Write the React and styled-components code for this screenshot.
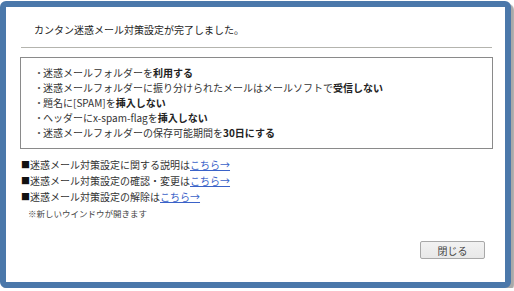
import React from 'react';
import styled, { createGlobalStyle } from 'styled-components';

const GlobalStyle = createGlobalStyle`
  html, body {
    margin: 0;
    padding: 0;
    background: #ffffff;
  }
  body {
    font-family: "DejaVu Sans", "Noto Sans CJK JP", sans-serif;
    color: #333333;
  }
`;

const Window = styled.div`
  box-sizing: border-box;
  width: 511px;
  height: 287px;
  margin-top: 1px;
  border: 6px solid #4b78aa;
  border-radius: 6px;
  background: #ffffff;
  box-shadow: 3px 3px 1px #a9a9a9;
  padding: 0 12px 0 14px;
  display: flex;
  flex-direction: column;
`;

const Title = styled.div`
  font-family: "Noto Sans CJK JP", sans-serif;
  font-size: 10px;
  line-height: 15px;
  color: #1e1e1e;
  padding: 15px 0 0 13px;
  height: 25px;
  border-bottom: 1px solid #b4b4ae;
  margin: 0 1px 0 1px;
`;

const SettingBox = styled.ul`
  list-style: none;
  margin: 9px 0 0 0;
  padding: 7px 0 8px 13px;
  border: 1px solid #8a8a8a;
`;

const Item = styled.li`
  font-family: "Noto Sans CJK JP", sans-serif;
  font-size: 10px;
  line-height: 15px;
  display: flex;
  &::before {
    content: "・";
    width: 9px;
    color: #555555;
  }
  b {
    font-weight: 700;
    color: #222222;
  }
`;

const LinkList = styled.div`
  margin-top: 8px;
  padding-left: 1px;
`;

const LinkRow = styled.div`
  font-family: "Noto Sans CJK JP", sans-serif;
  font-size: 10px;
  line-height: 15px;
  color: #333333;
  &::before {
    content: "■";
    font-family: "Noto Sans CJK JP", sans-serif;
    font-size: 9px;
    color: #111111;
    position: relative;
    top: -1px;
  }
  a {
    color: #3a62c8;
    text-decoration: underline;
  }
`;

const Note = styled.div`
  font-family: "Noto Sans CJK JP", sans-serif;
  font-size: 8.5px;
  line-height: 15px;
  color: #444444;
  padding-left: 7px;
  margin-top: 1px;
`;

const Footer = styled.div`
  display: flex;
  justify-content: flex-end;
  margin-top: auto;
  padding: 0 8px 23px 0;
`;

const CloseButton = styled.button`
  box-sizing: border-box;
  width: 65px;
  height: 18px;
  padding: 0;
  border: 1px solid #a8a8a8;
  border-radius: 2px;
  background: linear-gradient(#f2f2f2, #e8e8e8);
  font-family: "Noto Sans CJK JP", sans-serif;
  font-size: 10px;
  color: #444444;
`;

const settings = [
  ['迷惑メールフォルダーを', '利用する'],
  ['迷惑メールフォルダーに振り分けられたメールはメールソフトで', '受信しない'],
  ['題名に[SPAM]を', '挿入しない'],
  ['ヘッダーにx-spam-flagを', '挿入しない'],
  ['迷惑メールフォルダーの保存可能期間を', '30日にする'],
];

const links = [
  '迷惑メール対策設定に関する説明は',
  '迷惑メール対策設定の確認・変更は',
  '迷惑メール対策設定の解除は',
];

export default function App() {
  return (
    <>
      <GlobalStyle />
      <Window>
        <Title>カンタン迷惑メール対策設定が完了しました。</Title>
        <SettingBox>
          {settings.map(([text, strong]) => (
            <Item key={text}>
              <span>
                {text}
                <b>{strong}</b>
              </span>
            </Item>
          ))}
        </SettingBox>
        <LinkList>
          {links.map((text) => (
            <LinkRow key={text}>
              {text}
              <a href="#">こちら→</a>
            </LinkRow>
          ))}
          <Note>※新しいウインドウが開きます</Note>
        </LinkList>
        <Footer>
          <CloseButton type="button">閉じる</CloseButton>
        </Footer>
      </Window>
    </>
  );
}
